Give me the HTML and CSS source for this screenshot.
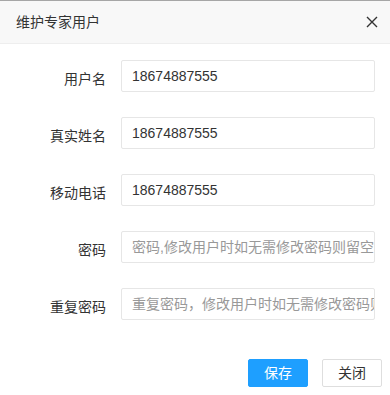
FILE: index.html
```html
<!DOCTYPE html>
<html lang="zh-CN">
<head>
	<meta charset="UTF-8">
	<title>维护专家用户</title>
	<link rel="stylesheet" href="styles.css">
</head>
<body>
	<div class="layer">
		<div class="layer-title">
			<span>维护专家用户</span>
			<a class="layer-close" href="javascript:;">
				<svg width="12" height="12" viewBox="0 0 12 12">
					<path d="M1 1 L11 11 M11 1 L1 11" stroke="#333" stroke-width="1.4" fill="none"/>
				</svg>
			</a>
		</div>
		<form class="layer-form">
			<div class="form-item">
				<label class="form-label">用户名</label>
				<input class="form-input" type="text" value="18674887555">
			</div>
			<div class="form-item">
				<label class="form-label">真实姓名</label>
				<input class="form-input" type="text" value="18674887555">
			</div>
			<div class="form-item">
				<label class="form-label">移动电话</label>
				<input class="form-input" type="text" value="18674887555">
			</div>
			<div class="form-item">
				<label class="form-label">密码</label>
				<input class="form-input" type="password" placeholder="密码,修改用户时如无需修改密码则留空">
			</div>
			<div class="form-item">
				<label class="form-label">重复密码</label>
				<input class="form-input" type="password" placeholder="重复密码，修改用户时如无需修改密码则留空">
			</div>
		</form>
		<div class="layer-btn">
			<a class="btn btn-primary" href="javascript:;">保存</a>
			<a class="btn" href="javascript:;">关闭</a>
		</div>
	</div>
</body>
</html>
```

FILE: styles.css
```css
html, body {
	margin: 0;
	padding: 0;
	background: #fff;
}
body {
	font-family: "Liberation Sans", "Noto Sans CJK SC", sans-serif;
	font-size: 14px;
	color: #333;
	border-top: 1px solid #a6a6a6;
}
.layer {
	width: 390px;
}
.layer-title {
	height: 42px;
	line-height: 42px;
	padding: 0 0 0 16px;
	background: #f8f8f8;
	border-bottom: 1px solid #eee;
	display: flex;
	align-items: center;
	justify-content: space-between;
}
.layer-close {
	width: 12px;
	height: 12px;
	margin-right: 12px;
	display: flex;
}
.layer-form {
	padding-top: 16px;
	display: flex;
	flex-direction: column;
	gap: 25px;
}
.form-item {
	display: flex;
	align-items: flex-start;
}
.form-label {
	width: 121px;
	padding: 9px 15px 0 0;
	line-height: 20px;
	text-align: right;
	box-sizing: border-box;
}
.form-input {
	width: 254px;
	height: 32px;
	box-sizing: border-box;
	padding: 0 0 0 10px;
	border: 1px solid #e6e6e6;
	border-radius: 2px;
	font-family: "Liberation Sans", "Noto Sans CJK SC", sans-serif;
	font-size: 14px;
	color: #333;
	outline: none;
	background: #fff;
}
.form-input::placeholder {
	color: #999;
}
.layer-btn {
	display: flex;
	justify-content: flex-end;
	gap: 14px;
	padding: 39px 8px 0 0;
}
.btn {
	width: 60px;
	height: 28px;
	line-height: 26px;
	box-sizing: border-box;
	border: 1px solid #dedede;
	border-radius: 2px;
	background: #fff;
	color: #333;
	text-align: center;
	text-decoration: none;
	font-size: 14px;
}
.btn-primary {
	background: #1e9fff;
	border-color: #1e9fff;
	color: #fff;
}
```
